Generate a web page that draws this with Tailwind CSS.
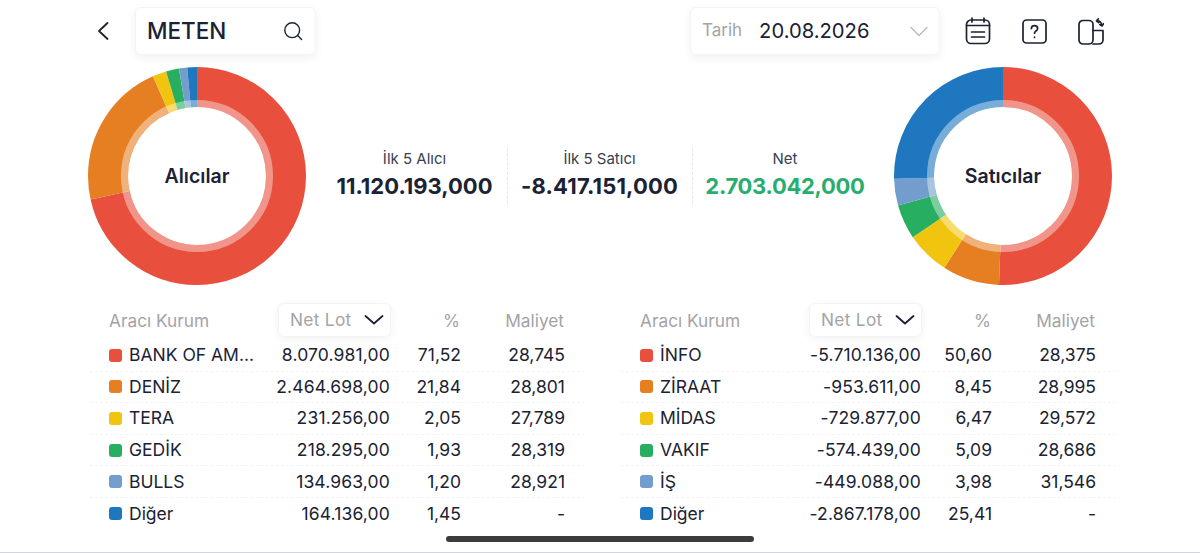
<!DOCTYPE html>
<html lang="en">
<head>
  <meta charset="UTF-8" />
  <title>Takas</title>
  <script src="https://cdn.jsdelivr.net/npm/@tailwindcss/browser@4"></script>
</head>
<body class="bg-white">
  <div class="relative w-[1200px] h-[553px] overflow-hidden font-['Inter','Liberation_Sans',sans-serif] text-[#1a2233]">

    <!-- top bar -->
    <div class="flex items-center h-[48px] mt-[7px] pl-[97px]">
      <svg class="w-[13px] h-[20px]" viewBox="0 0 13 20" fill="none" stroke="#1a2233" stroke-width="1.8" stroke-linecap="round" stroke-linejoin="round"><path d="M10.500 2 2 10l8.500 8"/></svg>
      <div class="ml-[25px] w-[181px] h-[48px] flex items-center justify-between pl-[11px] pr-[12px] rounded-md border border-gray-100 shadow-[0_3px_10px_rgba(0,0,0,0.06)]">
        <span class="text-[22.5px] font-medium">METEN</span>
        <svg class="w-[20px] h-[20px]" viewBox="0 0 20 20" fill="none" stroke="#1a2233" stroke-width="1.4" stroke-linecap="round"><circle cx="9.2" cy="9.2" r="7.4"/><path d="m14.6 14.6 4 4"/></svg>
      </div>
      <div class="ml-[374px] w-[250px] h-[48px] flex items-center pl-[11px] pr-[11px] rounded-md border border-gray-100 shadow-[0_3px_10px_rgba(0,0,0,0.06)]">
        <span class="text-[17px] text-[#a3a3a8]">Tarih</span>
        <span class="ml-[17px] pt-[1px] text-[20.2px]">20.08.2026</span>
        <svg class="ml-auto w-[18px] h-[11px]" viewBox="0 0 18 11" fill="none" stroke="#b8bcc4" stroke-width="1.5" stroke-linecap="round" stroke-linejoin="round"><path d="m1 1.500 8 8 8-8"/></svg>
      </div>
      <div class="ml-[25px] flex items-center gap-[31px]">
        <svg class="w-[26px] h-[28px]" viewBox="0 0 26 28" fill="none" stroke="#1a2233" stroke-width="1.7" stroke-linecap="round"><rect x="1.500" y="3" width="23" height="23.500" rx="4.500"/><path d="M7 1v4M19 1v4M1.500 8.500h23M6.500 15h13M6.500 20h13"/></svg>
        <svg class="w-[25px] h-[25px]" viewBox="0 0 25 25" fill="none" stroke="#1a2233" stroke-width="1.7" stroke-linecap="round"><rect x="1" y="1" width="23" height="23" rx="3.500"/><path d="M9.400 9.600c0-1.900 1.400-3 3.100-3s3.100 1.100 3.100 2.800c0 2.600-3.100 2.500-3.100 4.800"/><path d="M12.500 18.200v.3"/></svg>
        <svg class="w-[26px] h-[27px]" viewBox="0 0 26 27" fill="none" stroke="#1a2233" stroke-width="1.7" stroke-linecap="round" stroke-linejoin="round"><rect x="1" y="2.500" width="14" height="23.500" rx="4"/><path d="M15 12.500h10V22a4 4 0 0 1-4 4h-6"/><path d="M19 2.600c2.700.3 4.600 2.200 5 5M20.400.9 18.400 2.800l2.200 1.800M25.600 5.600l-1.500 2.400-2.400-1.500" stroke-width="1.600"/></svg>
      </div>
    </div>

    <!-- donuts and totals -->
    <div class="flex items-center justify-between mt-[12px] pl-[88px] pr-[88px]">
      <div class="relative w-[218px] h-[218px]">
        <svg class="w-full h-full -rotate-90" viewBox="0 0 218 218" fill="none" stroke-width="40">
          <circle cx="109" cy="109" r="89" stroke="#e84f3d" pathLength="100" stroke-dasharray="71.52 100" stroke-dashoffset="0"/>
          <circle cx="109" cy="109" r="89" stroke="#e67e22" pathLength="100" stroke-dasharray="21.84 100" stroke-dashoffset="-71.52"/>
          <circle cx="109" cy="109" r="89" stroke="#f1c40f" pathLength="100" stroke-dasharray="2.05 100" stroke-dashoffset="-93.36"/>
          <circle cx="109" cy="109" r="89" stroke="#27ae60" pathLength="100" stroke-dasharray="1.93 100" stroke-dashoffset="-95.41"/>
          <circle cx="109" cy="109" r="89" stroke="#739dcc" pathLength="100" stroke-dasharray="1.2 100" stroke-dashoffset="-97.34"/>
          <circle cx="109" cy="109" r="89" stroke="#1f77c0" pathLength="100" stroke-dasharray="1.46 100" stroke-dashoffset="-98.54"/>
          <circle cx="109" cy="109" r="72.5" stroke="#ffffff" stroke-opacity="0.4" stroke-width="7"/>
        </svg>
        <div class="absolute inset-0 pt-[1px] flex items-center justify-center text-[19.5px] font-semibold">Alıcılar</div>
      </div>

      <div class="flex">
        <div class="w-[185px] h-[56px] flex flex-col items-center border-r border-dashed border-gray-200">
          <span class="text-[15px] leading-[21px] text-[#374151]">İlk 5 Alıcı</span>
          <span class="text-[22px] font-bold leading-[28px] mt-[3px]">11.120.193,000</span>
        </div>
        <div class="w-[185px] h-[56px] flex flex-col items-center border-r border-dashed border-gray-200">
          <span class="text-[15px] leading-[21px] text-[#374151]">İlk 5 Satıcı</span>
          <span class="text-[22px] font-bold leading-[28px] mt-[3px] tracking-[0.15px]">-8.417.151,000</span>
        </div>
        <div class="w-[185px] h-[56px] flex flex-col items-center">
          <span class="text-[15px] leading-[21px] text-[#374151]">Net</span>
          <span class="text-[22px] font-bold leading-[28px] mt-[3px] tracking-[-0.3px] text-[#27ae6e]">2.703.042,000</span>
        </div>
      </div>

      <div class="relative w-[218px] h-[218px]">
        <svg class="w-full h-full -rotate-90" viewBox="0 0 218 218" fill="none" stroke-width="40">
          <circle cx="109" cy="109" r="89" stroke="#e84f3d" pathLength="100" stroke-dasharray="50.6 100" stroke-dashoffset="0"/>
          <circle cx="109" cy="109" r="89" stroke="#e67e22" pathLength="100" stroke-dasharray="8.45 100" stroke-dashoffset="-50.6"/>
          <circle cx="109" cy="109" r="89" stroke="#f1c40f" pathLength="100" stroke-dasharray="6.47 100" stroke-dashoffset="-59.05"/>
          <circle cx="109" cy="109" r="89" stroke="#27ae60" pathLength="100" stroke-dasharray="5.09 100" stroke-dashoffset="-65.52"/>
          <circle cx="109" cy="109" r="89" stroke="#739dcc" pathLength="100" stroke-dasharray="3.98 100" stroke-dashoffset="-70.61"/>
          <circle cx="109" cy="109" r="89" stroke="#1f77c0" pathLength="100" stroke-dasharray="25.41 100" stroke-dashoffset="-74.59"/>
          <circle cx="109" cy="109" r="72.5" stroke="#ffffff" stroke-opacity="0.4" stroke-width="7"/>
        </svg>
        <div class="absolute inset-0 pt-[1px] flex items-center justify-center text-[19.5px] font-semibold">Satıcılar</div>
      </div>
    </div>

    <!-- tables -->
    <div class="flex mt-[17px] pl-[90px] gap-[36px] text-[17.500px]">
      <div class="w-[495px]">
        <div class="flex items-center h-[38px] pl-[19px] text-[17.300px] text-[#a3a3a8]">
          <span class="w-[146px] -mt-[1px]">Aracı Kurum</span>
          <div class="w-[135px] flex justify-end"><div class="w-[113px] h-[34px] -mr-[1px] -mt-[3px] flex items-center justify-between pl-[11px] pr-[6px] rounded-md border border-gray-100 shadow-[0_2px_8px_rgba(0,0,0,0.06)] tracking-[0.3px]">Net Lot<svg class="w-[20px] h-[10px]" viewBox="0 0 20 10" fill="none" stroke="#1a2233" stroke-width="1.8" stroke-linecap="round" stroke-linejoin="round"><path d="m1.500 1 8.500 7.500L18.500 1"/></svg></div></div>
          <span class="w-[71px] text-right -mt-[1px] -ml-[1px]">%</span>
          <span class="w-[104px] text-right -mt-[1px]">Maliyet</span>
        </div>
        <div class="flex items-center h-[31.6px] pl-[19px] border-b border-dashed border-gray-100"><span class="w-[13px] h-[13px] rounded-[3px] bg-[#e84f3d]"></span><span class="w-[133px] pl-[7px] whitespace-nowrap">BANK OF AM...</span><span class="w-[135px] text-right tracking-[0.15px]">8.070.981,00</span><span class="w-[71px] text-right">71,52</span><span class="w-[104px] text-right">28,745</span></div>
        <div class="flex items-center h-[31.6px] pl-[19px] border-b border-dashed border-gray-100"><span class="w-[13px] h-[13px] rounded-[3px] bg-[#e67e22]"></span><span class="w-[133px] pl-[7px]">DENİZ</span><span class="w-[135px] text-right tracking-[0.15px]">2.464.698,00</span><span class="w-[71px] text-right">21,84</span><span class="w-[104px] text-right">28,801</span></div>
        <div class="flex items-center h-[31.6px] pl-[19px] border-b border-dashed border-gray-100"><span class="w-[13px] h-[13px] rounded-[3px] bg-[#f1c40f]"></span><span class="w-[133px] pl-[7px]">TERA</span><span class="w-[135px] text-right tracking-[0.15px]">231.256,00</span><span class="w-[71px] text-right">2,05</span><span class="w-[104px] text-right">27,789</span></div>
        <div class="flex items-center h-[31.6px] pl-[19px] border-b border-dashed border-gray-100"><span class="w-[13px] h-[13px] rounded-[3px] bg-[#27ae60]"></span><span class="w-[133px] pl-[7px]">GEDİK</span><span class="w-[135px] text-right tracking-[0.15px]">218.295,00</span><span class="w-[71px] text-right">1,93</span><span class="w-[104px] text-right">28,319</span></div>
        <div class="flex items-center h-[31.6px] pl-[19px] border-b border-dashed border-gray-100"><span class="w-[13px] h-[13px] rounded-[3px] bg-[#739dcc]"></span><span class="w-[133px] pl-[7px]">BULLS</span><span class="w-[135px] text-right tracking-[0.15px]">134.963,00</span><span class="w-[71px] text-right">1,20</span><span class="w-[104px] text-right">28,921</span></div>
        <div class="flex items-center h-[31.6px] pl-[19px]"><span class="w-[13px] h-[13px] rounded-[3px] bg-[#1f77c0]"></span><span class="w-[133px] pl-[7px]">Diğer</span><span class="w-[135px] text-right tracking-[0.15px]">164.136,00</span><span class="w-[71px] text-right">1,45</span><span class="w-[104px] text-right">-</span></div>
      </div>

      <div class="w-[495px]">
        <div class="flex items-center h-[38px] pl-[19px] text-[17.300px] text-[#a3a3a8]">
          <span class="w-[146px] -mt-[1px]">Aracı Kurum</span>
          <div class="w-[135px] flex justify-end"><div class="w-[113px] h-[34px] -mr-[1px] -mt-[3px] flex items-center justify-between pl-[11px] pr-[6px] rounded-md border border-gray-100 shadow-[0_2px_8px_rgba(0,0,0,0.06)] tracking-[0.3px]">Net Lot<svg class="w-[20px] h-[10px]" viewBox="0 0 20 10" fill="none" stroke="#1a2233" stroke-width="1.8" stroke-linecap="round" stroke-linejoin="round"><path d="m1.500 1 8.500 7.500L18.500 1"/></svg></div></div>
          <span class="w-[71px] text-right -mt-[1px] -ml-[1px]">%</span>
          <span class="w-[104px] text-right -mt-[1px]">Maliyet</span>
        </div>
        <div class="flex items-center h-[31.6px] pl-[19px] border-b border-dashed border-gray-100"><span class="w-[13px] h-[13px] rounded-[3px] bg-[#e84f3d]"></span><span class="w-[133px] pl-[7px]">İNFO</span><span class="w-[135px] text-right tracking-[0.15px]">-5.710.136,00</span><span class="w-[71px] text-right">50,60</span><span class="w-[104px] text-right">28,375</span></div>
        <div class="flex items-center h-[31.6px] pl-[19px] border-b border-dashed border-gray-100"><span class="w-[13px] h-[13px] rounded-[3px] bg-[#e67e22]"></span><span class="w-[133px] pl-[7px]">ZİRAAT</span><span class="w-[135px] text-right tracking-[0.15px]">-953.611,00</span><span class="w-[71px] text-right">8,45</span><span class="w-[104px] text-right">28,995</span></div>
        <div class="flex items-center h-[31.6px] pl-[19px] border-b border-dashed border-gray-100"><span class="w-[13px] h-[13px] rounded-[3px] bg-[#f1c40f]"></span><span class="w-[133px] pl-[7px]">MİDAS</span><span class="w-[135px] text-right tracking-[0.15px]">-729.877,00</span><span class="w-[71px] text-right">6,47</span><span class="w-[104px] text-right">29,572</span></div>
        <div class="flex items-center h-[31.6px] pl-[19px] border-b border-dashed border-gray-100"><span class="w-[13px] h-[13px] rounded-[3px] bg-[#27ae60]"></span><span class="w-[133px] pl-[7px]">VAKIF</span><span class="w-[135px] text-right tracking-[0.15px]">-574.439,00</span><span class="w-[71px] text-right">5,09</span><span class="w-[104px] text-right">28,686</span></div>
        <div class="flex items-center h-[31.6px] pl-[19px] border-b border-dashed border-gray-100"><span class="w-[13px] h-[13px] rounded-[3px] bg-[#739dcc]"></span><span class="w-[133px] pl-[7px]">İŞ</span><span class="w-[135px] text-right tracking-[0.15px]">-449.088,00</span><span class="w-[71px] text-right">3,98</span><span class="w-[104px] text-right">31,546</span></div>
        <div class="flex items-center h-[31.6px] pl-[19px]"><span class="w-[13px] h-[13px] rounded-[3px] bg-[#1f77c0]"></span><span class="w-[133px] pl-[7px]">Diğer</span><span class="w-[135px] text-right tracking-[0.15px]">-2.867.178,00</span><span class="w-[71px] text-right">25,41</span><span class="w-[104px] text-right">-</span></div>
      </div>
    </div>

    <!-- home indicator -->
    <div class="absolute left-[446px] top-[536px] w-[308px] h-[6px] rounded-full bg-[#3c3c3c]"></div>
    <div class="absolute left-0 right-0 bottom-0 h-[1px] bg-gray-300"></div>
  </div>
</body>
</html>
